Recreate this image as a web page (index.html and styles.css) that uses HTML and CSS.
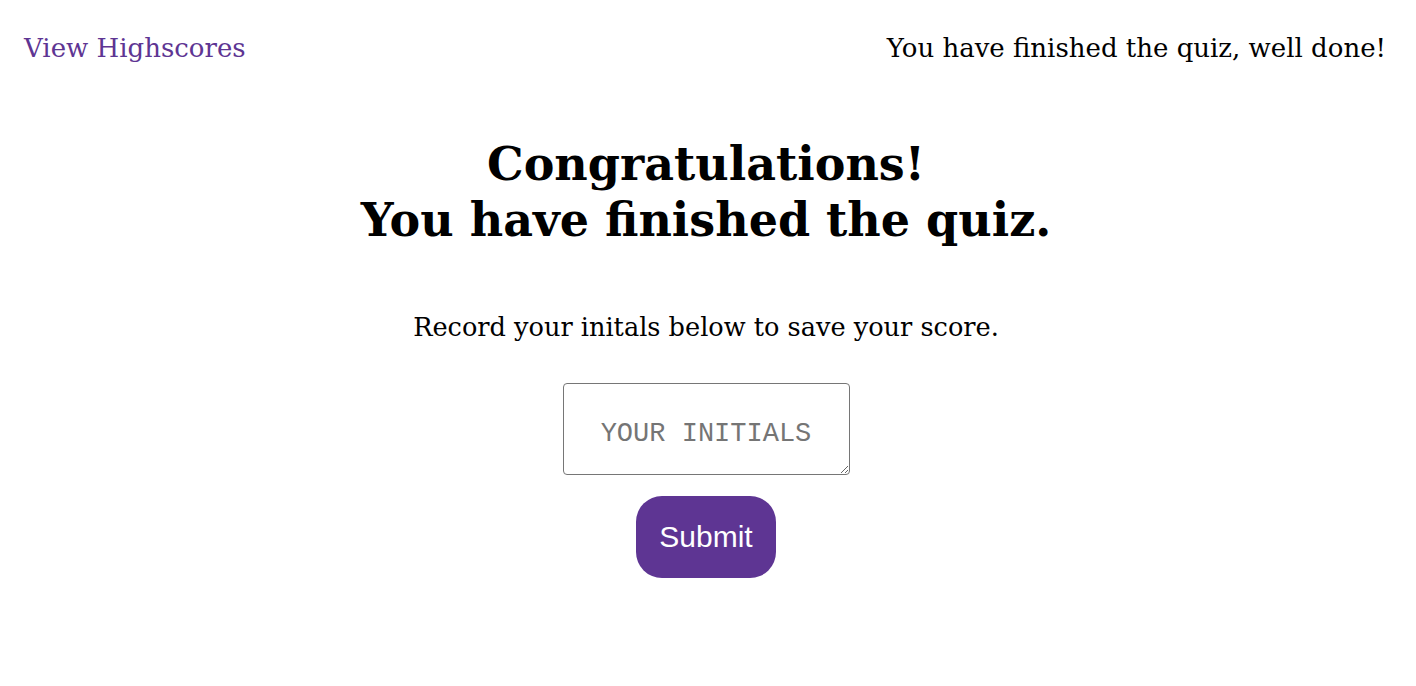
FILE: index.html
```html
<!DOCTYPE html>
<html>
<head>
<meta charset="utf-8">
<link rel="stylesheet" href="styles.css">
</head>
<body>
<header class="top">
  <a class="hs-link" href="#">View Highscores</a>
  <span class="status">You have finished the quiz, well done!</span>
</header>
<main class="done">
  <h1 class="title">Congratulations!<br>You have finished the quiz.</h1>
  <p class="lead">Record your initals below to save your score.</p>
  <textarea class="initials" placeholder="YOUR INITIALS"></textarea>
  <button class="submit">Submit</button>
</main>
</body>
</html>
```
FILE: styles.css
```css
html, body { margin: 0; padding: 0; background: #fff; }
body { font-family: "DejaVu Serif", Georgia, serif; color: #000; }
.top {
  display: flex;
  justify-content: space-between;
  align-items: baseline;
  padding: 30px 30px 0 24px;
  font-size: 26px;
  line-height: 36px;
}
.hs-link { color: #5e3593; text-decoration: none; }
.done {
  display: flex;
  flex-direction: column;
  align-items: center;
  padding-right: 4px;
}
.title {
  margin: 70px 0 0;
  font-size: 46px;
  line-height: 56px;
  font-weight: bold;
  text-align: center;
}
.lead { margin: 63px 0 0; font-size: 25.6px; line-height: 32px; }
.initials {
  margin-top: 40px;
  width: 287px;
  height: 92px;
  box-sizing: border-box;
  border: 1px solid #767676;
  border-radius: 4px;
  font-family: "Liberation Mono", "Courier New", monospace;
  font-size: 27px;
  text-align: center;
  padding: 35px 8px 0;
  resize: both;
}
.initials::placeholder { color: #757575; }
.submit {
  margin-top: 21px;
  width: 140px;
  height: 82px;
  border: none;
  border-radius: 26px;
  background: #5e3593;
  color: #fff;
  font-family: "Liberation Sans", Arial, sans-serif;
  font-size: 30px;
}
```
